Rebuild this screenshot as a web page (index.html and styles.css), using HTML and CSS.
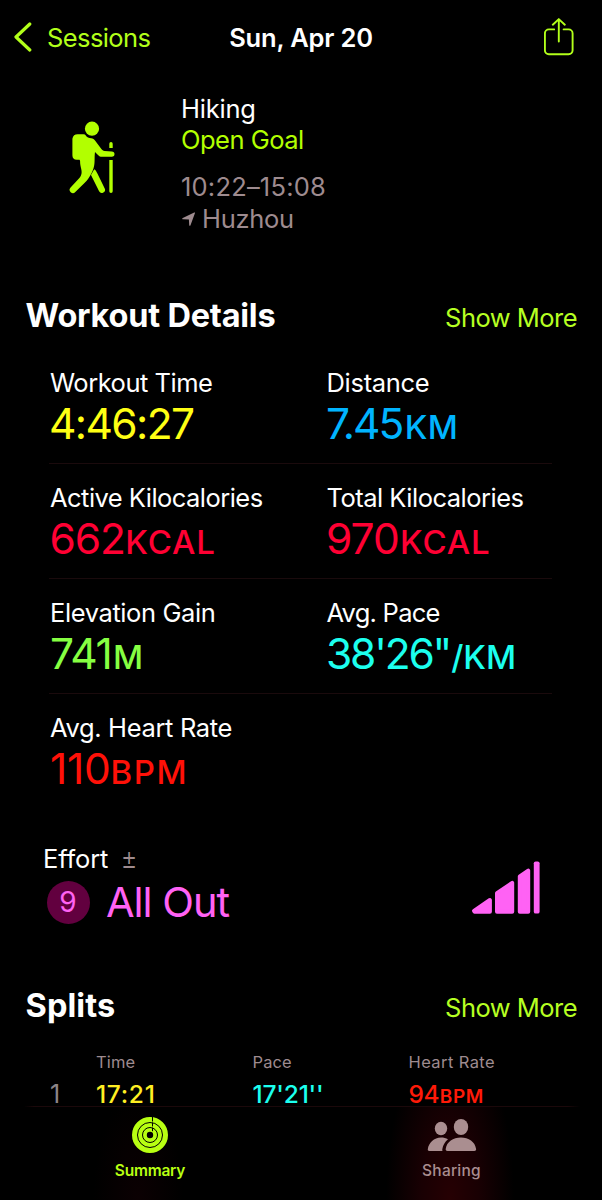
FILE: index.html
```html
<!DOCTYPE html>
<html lang="en">
<head>
<meta charset="utf-8">
<title>Workout Summary</title>
<link rel="stylesheet" href="styles.css">
</head>
<body>
<div class="app">
  <header class="nav">
    <a class="nav-back">
      <svg width="20" height="30" viewBox="0 0 20 30" fill="none" stroke="currentColor" stroke-width="3.2" stroke-linecap="round" stroke-linejoin="round"><path d="M17.800 2 4 15l13.800 13"/></svg>
      <span class="nav-label">Sessions</span>
    </a>
    <h1 class="nav-title">Sun, Apr 20</h1>
    <a class="nav-share">
      <svg width="30" height="38" viewBox="0 0 30 38" fill="none" stroke="currentColor" stroke-width="1.9" stroke-linecap="round" stroke-linejoin="round"><path d="M10.200 11.400H4.900a4 4 0 0 0-4 4v16.800a4 4 0 0 0 4 4h19.700a4 4 0 0 0 4-4V15.400a4 4 0 0 0-4-4h-5M14.800 23.500V1.200M8.800 6.700l6-5.600 6 5.600"/></svg>
    </a>
  </header>

  <main class="content">
    <section class="workout">
      <svg class="hiker" width="48" height="76" viewBox="68 120 48 76" fill="currentColor">
        <circle cx="92" cy="128.700" r="7.100"/>
        <path d="M78 134.300h5.500c1 0 1.800.4 2.300 1.200 1.200 2 3 2.500 5.400 2.700 1.800.200 2.900 1.100 4 2.500l6.200 8.200c.8 1 1.700 1.900 3.200 2.100l7.200.4a2.700 2.700 0 0 1 0 5.400h-9.800c-1.800 0-2.800-.7-4-1.900l-3-3c-.8 6 .3 10.500-1.400 16-1 3.500-3.200 7.500-5.400 10.800-1.100 1.600-2.300 2.800-3.700 4.200l-9.200 9.200a3.200 3.200 0 0 1-4.700-4.500l8.800-9.700c1.500-1.700 1.900-3 2.200-4.900.4-4.200-1.600-6.500-1.500-11.600 0-.9-.3-1.600-1.200-1.600h-2.100a4.600 4.600 0 0 1-4.400-4.600v-16.500a5.500 5.500 0 0 1 5.600-4.400z"/>
        <path d="M94.200 169.300c1.700 1 2.200 2.400 3.200 4.300l7.200 14.600a3.100 3.100 0 0 1-5.500 3l-8.100-16.300z"/>
        <path d="M109.300 143.700a1.700 1.700 0 0 1 3.400 0v4.300h-3.400zM109.300 160h3.400v31.200a1.700 1.700 0 0 1-3.400 0z"/>
      </svg>
      <div class="workout-info">
        <p class="line name">Hiking</p>
        <p class="line goal">Open Goal</p>
        <p class="line time">10:22–15:08</p>
        <p class="line place">
          <svg width="14" height="14" viewBox="0 0 14 14" fill="currentColor"><path d="M13 1.100 8.500 13.300c-.3.800-1.200.7-1.300-.1L6.900 7.600 1 7.300C.1 7.200 0 6.400.8 6.100L12.200.5c.6-.3 1 0 .8.6z"/></svg>
          <span>Huzhou</span>
        </p>
      </div>
    </section>

    <div class="section-head details-head">
      <h2 class="section-title">Workout Details</h2>
      <a class="show-more">Show More</a>
    </div>

    <section class="metrics">
      <div class="metric-row">
        <div class="metric"><p class="label l-time">Workout Time</p><p class="value v-time">4:46:27</p></div>
        <div class="metric"><p class="label l-dist">Distance</p><p class="value v-dist">7.45<span class="unit">KM</span></p></div>
      </div>
      <div class="metric-row">
        <div class="metric"><p class="label l-kcal">Active Kilocalories</p><p class="value v-active">662<span class="unit">KCAL</span></p></div>
        <div class="metric"><p class="label l-kcal l-total">Total Kilocalories</p><p class="value v-total">970<span class="unit">KCAL</span></p></div>
      </div>
      <div class="metric-row">
        <div class="metric"><p class="label l-elev">Elevation Gain</p><p class="value v-elev">741<span class="unit">M</span></p></div>
        <div class="metric"><p class="label l-pace">Avg. Pace</p><p class="value v-pace">38'26"<span class="unit">/KM</span></p></div>
      </div>
      <div class="metric-row">
        <div class="metric"><p class="label l-heart">Avg. Heart Rate</p><p class="value v-heart">110<span class="unit">BPM</span></p></div>
      </div>
    </section>

    <section class="effort">
      <div>
        <p class="effort-label">Effort<span class="plus-minus">±</span></p>
        <div class="effort-value"><span class="badge">9</span><span class="effort-name">All Out</span></div>
      </div>
      <svg class="effort-bars" width="70" height="54" viewBox="471 860 70 54" fill="currentColor" stroke="currentColor" stroke-width="4" stroke-linejoin="round">
        <path d="M474 910.800 489.900 900v11.700H474.600z"/>
        <path d="M497 893.200 512.200 882.800v28.900H497z"/>
        <path d="M519.800 876.300 528.200 870.600v41.100h-8.400z"/>
        <path d="M535.700 863.300h2v48.400h-2z" stroke-width="3.800"/>
      </svg>
    </section>

    <div class="section-head splits-head">
      <h2 class="section-title splits-title">Splits</h2>
      <a class="show-more">Show More</a>
    </div>

    <section class="splits">
      <div class="split-row split-header"><span></span><span class="h-time">Time</span><span class="h-pace">Pace</span><span class="h-heart">Heart Rate</span></div>
      <div class="split-row split"><span class="index">1</span><span class="s-time">17:21</span><span class="s-pace">17'21''</span><span class="s-heart">94<span class="s-unit">BPM</span></span></div>
    </section>
  </main>

  <nav class="tabs">
    <a class="tab tab-summary">
      <svg width="38" height="38" viewBox="-19 -19 38 38" fill="none">
        <circle r="10.600" stroke="currentColor" stroke-width="14.800"/>
        <g stroke="#000" stroke-width="1"><circle r="12.500"/><circle r="7.500"/><path d="M2.500-18v4.500M2.500-12.500v4M2.500-7.300v3.500"/></g>
      </svg>
      <span class="t-summary">Summary</span>
    </a>
    <a class="tab tab-sharing">
      <svg width="50" height="38" viewBox="426 1116 50 38" fill="currentColor">
        <ellipse cx="440" cy="1128.500" rx="6.200" ry="6.800"/>
        <ellipse cx="460" cy="1127" rx="7.200" ry="8"/>
        <path d="M428.300 1151c-1.100 0-1.700-.6-1.500-1.700.8-6.500 6.300-11.700 13.200-11.700 2.700 0 5 .6 7 1.700-3 2.600-5.100 5.800-5.700 9.900-.1.700 0 1.300.2 1.800z"/>
        <path d="M446.500 1151c-1.200 0-2-.7-1.800-1.900 1-7.300 7.500-11.500 15.200-11.500s14.200 4.200 15.200 11.500c.2 1.200-.6 1.900-1.800 1.900z"/>
      </svg>
      <span class="t-sharing">Sharing</span>
    </a>
  </nav>
</div>
</body>
</html>
```
FILE: styles.css
```css
* { box-sizing: border-box; }

body {
  margin: 0;
  background: #000;
  color: #fff;
  font-family: Inter, "Liberation Sans", sans-serif;
  font-size: 25.5px;
}

h1, h2, p { margin: 0; }

.app {
  width: 602px;
  height: 1200px;
  display: flex;
  flex-direction: column;
}

/* Navigation bar */
.nav {
  flex: none;
  height: 74px;
  display: grid;
  grid-template-columns: 1fr auto 1fr;
  align-items: center;
  padding: 0 28px 0 12px;
  color: #b2ff1a;
}
.nav-back { display: flex; align-items: center; gap: 15px; }
.nav-label { letter-spacing: -0.6px; }
.nav-title {
  color: #fff;
  font-size: 25.5px;
  font-weight: 600;
  letter-spacing: -0.18px;
  margin-left: 16px;
}
.nav-share { display: flex; justify-content: flex-end; }

.content {
  flex: none;
  height: 1032px;
}

/* Workout overview */
.workout {
  display: flex;
  height: 222px;
  padding: 18.5px 0 0 68px;
}
.hiker { margin-top: 27.5px; color: #b2ff00; }
.workout-info { margin-left: 64px; }
.line { line-height: 31.5px; }
.name { letter-spacing: -0.2px; padding-left: 1px; }
.goal { color: #b2ff00; letter-spacing: -0.51px; padding-left: 1px; }
.time { color: #9e8b8f; letter-spacing: 0.2px; margin-top: 15.5px; padding-left: 1px; }
.place {
  display: flex;
  align-items: center;
  gap: 6px;
  padding-left: 2px;
  color: #9e8b8f;
  letter-spacing: -0.3px;
}
.place svg { margin-top: 2px; }

/* Section headings */
.section-head {
  display: flex;
  justify-content: space-between;
  align-items: baseline;
  height: 40px;
  line-height: 40px;
  padding: 0 25px 0 25.5px;
}
.section-title { font-size: 32.5px; font-weight: 700; letter-spacing: -0.22px; }
.splits-title { letter-spacing: 0.1px; }
.show-more { color: #b6ff22; letter-spacing: -0.53px; }
.details-head { margin-bottom: 13px; }

/* Metrics */
.metrics { padding: 0 50px 0 49px; }
.metric-row {
  display: grid;
  grid-template-columns: 276.5px 1fr;
  height: 115px;
  padding-top: 18px;
  border-bottom: 1px solid #1a0a0c;
}
.metric-row:last-child { border-bottom-color: transparent; }
.label { line-height: 32px; white-space: nowrap; }
.l-time { letter-spacing: -0.49px; padding-left: 1px; }
.l-dist { letter-spacing: -0.3px; padding-left: 1px; }
.l-kcal { letter-spacing: -0.54px; padding-left: 1px; }
.l-total { letter-spacing: -0.51px; }
.l-elev { letter-spacing: -0.4px; padding-left: 1px; }
.l-pace { letter-spacing: -0.75px; padding-left: 1px; }
.l-heart { letter-spacing: -0.35px; padding-left: 1px; }

.value { font-size: 42.5px; line-height: 50px; white-space: nowrap; }
.unit { font-size: 33px; font-weight: 500; letter-spacing: 0.87px; }
.v-time { color: #ffff14; letter-spacing: -1.6px; }
.v-dist { color: #00b4ff; letter-spacing: -1.98px; padding-left: 0.5px; }
.v-dist .unit { margin-left: 2.5px; letter-spacing: 0.3px; }
.v-active, .v-total { color: #ff0033; }
.v-active { letter-spacing: -1.1px; padding-left: 0.5px; }
.v-active .unit { margin-left: 0.5px; }
.v-total { letter-spacing: -0.9px; padding-left: 0.5px; }
.v-total .unit { margin-left: 1px; }
.v-elev { color: #86ff42; letter-spacing: -1.3px; padding-left: 1px; }
.v-elev .unit { margin-left: 1.5px; }
.v-pace { color: #1cffee; letter-spacing: -2.2px; padding-left: 0.5px; }
.v-pace .unit { margin-left: 1px; letter-spacing: 0; }
.v-heart { color: #ff1108; letter-spacing: -0.29px; padding-left: 1px; }
.v-heart .unit { letter-spacing: 1.6px; }

/* Effort */
.effort {
  display: flex;
  justify-content: space-between;
  height: 86px;
  margin-top: 34px;
  padding: 0 61px 0 43px;
}
.effort-label { line-height: 32px; letter-spacing: -0.15px; }
.plus-minus {
  display: inline-block;
  margin-left: 12.5px;
  color: #9e8b8f;
  font-weight: 300;
  line-height: 30px;
  transform: scaleY(1.2) translateY(-1px);
}
.effort-value {
  display: flex;
  align-items: center;
  height: 54px;
  padding-left: 3.5px;
  color: #ff62f4;
}
.badge {
  width: 43px;
  height: 43px;
  border-radius: 50%;
  background: #62003f;
  font-size: 28px;
  line-height: 43px;
  text-align: center;
}
.effort-name { margin-left: 16.5px; font-size: 41.5px; letter-spacing: -1.05px; }
.effort-bars { color: #ff62f4; margin-top: 17px; }

/* Splits */
.splits-head { margin-top: 57px; }
.splits { padding: 25px 25px 0 49px; }
.split-row { display: grid; grid-template-columns: 47px 156.5px 156px 1fr; }
.split-header { font-size: 16.5px; line-height: 22px; color: #9e8b8f; }
.h-time { letter-spacing: 0.13px; }
.h-pace { letter-spacing: 0.09px; }
.h-heart { letter-spacing: 0.4px; }
.split { margin-top: 9px; font-size: 24.5px; line-height: 25px; font-weight: 500; }
.index { color: #8d8587; font-size: 25px; font-weight: 400; padding-left: 1px; }
.s-time { color: #ffee22; letter-spacing: 0.7px; }
.s-pace { color: #1cffee; letter-spacing: -0.2px; }
.s-heart { color: #ff1a08; letter-spacing: -0.43px; }
.s-unit { font-size: 19px; font-weight: 600; letter-spacing: 0.7px; margin-left: 0.5px; }

/* Tab bar */
.tabs {
  flex: none;
  height: 94px;
  display: grid;
  grid-template-columns: 1fr 1fr;
  background:
    linear-gradient(90deg, transparent 24px, #1b080a 34px, #1b080a 568px, transparent 580px) top / 100% 1px no-repeat,
    radial-gradient(ellipse 64px 170px at 450px 100%, #260003 0%, #190003 45%, transparent 100%),
    radial-gradient(ellipse 45px 110px at 138px 100%, #0b0002 0%, transparent 100%);
}
.tab {
  display: flex;
  flex-direction: column;
  align-items: center;
  padding-top: 10px;
  font-size: 15.5px;
  line-height: 20px;
}
.tab svg { flex: none; margin-bottom: 7px; }
.tab-summary { color: #b8ff12; font-weight: 600; padding-right: 1px; }
.tab-sharing { color: #aa8e90; font-weight: 500; }
.t-summary { letter-spacing: -0.21px; }
.t-sharing { letter-spacing: 0.24px; }
```
